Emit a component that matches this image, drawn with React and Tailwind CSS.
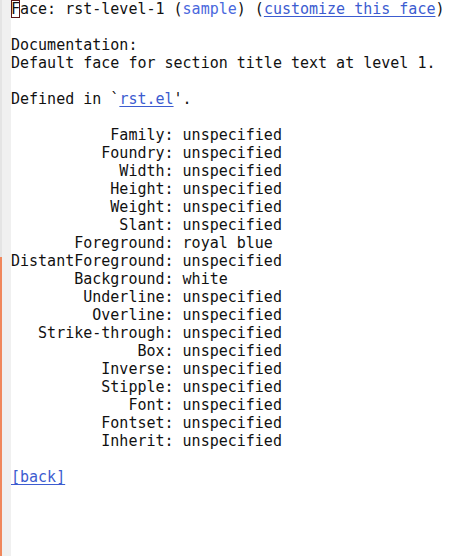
import React from 'react';

const props = [
  ['Family', 'unspecified'],
  ['Foundry', 'unspecified'],
  ['Width', 'unspecified'],
  ['Height', 'unspecified'],
  ['Weight', 'unspecified'],
  ['Slant', 'unspecified'],
  ['Foreground', 'royal blue'],
  ['DistantForeground', 'unspecified'],
  ['Background', 'white'],
  ['Underline', 'unspecified'],
  ['Overline', 'unspecified'],
  ['Strike-through', 'unspecified'],
  ['Box', 'unspecified'],
  ['Inverse', 'unspecified'],
  ['Stipple', 'unspecified'],
  ['Font', 'unspecified'],
  ['Fontset', 'unspecified'],
  ['Inherit', 'unspecified'],
];

const Line = ({ children }) => <div className="h-[18px]">{children}</div>;

const App = () => {
  return (
    <div className="flex w-[472px] h-[556px] bg-white overflow-hidden">
      {/* fringe */}
      <div className="flex w-[11px] shrink-0">
        <div className="w-[2px] bg-[#e4e4e4] flex flex-col">
          <div className="h-[257px]"></div>
          <div className="flex-1 bg-[#f0875c]"></div>
        </div>
        <div className="flex-1 bg-[#f0f0f0]"></div>
      </div>

      {/* buffer */}
      <div className="flex-1 whitespace-pre text-[15px] leading-[18px] text-[#111] font-['DejaVu_Sans_Mono',monospace]">
        <Line>
          <span className="outline outline-1 outline-[#5a1414] -outline-offset-1">F</span>
          {'ace: rst-level-1 ('}
          <span className="text-[#4a68dd]">sample</span>
          {') ('}
          <span className="text-[#3c5cd0] underline underline-offset-2">customize this face</span>
          {')'}
        </Line>
        <Line />
        <Line>Documentation:</Line>
        <Line>Default face for section title text at level 1.</Line>
        <Line />
        <Line>
          {'Defined in `'}
          <span className="text-[#3c5cd0] underline underline-offset-2">rst.el</span>
          {"'."}
        </Line>
        <Line />
        {props.map(([k, v]) => (
          <Line key={k}>{(k + ':').padStart(18, ' ') + ' ' + v}</Line>
        ))}
        <Line />
        <Line>
          <span className="text-[#3c5cd0] underline underline-offset-2">[back]</span>
        </Line>
      </div>
    </div>
  );
};

export default App;
